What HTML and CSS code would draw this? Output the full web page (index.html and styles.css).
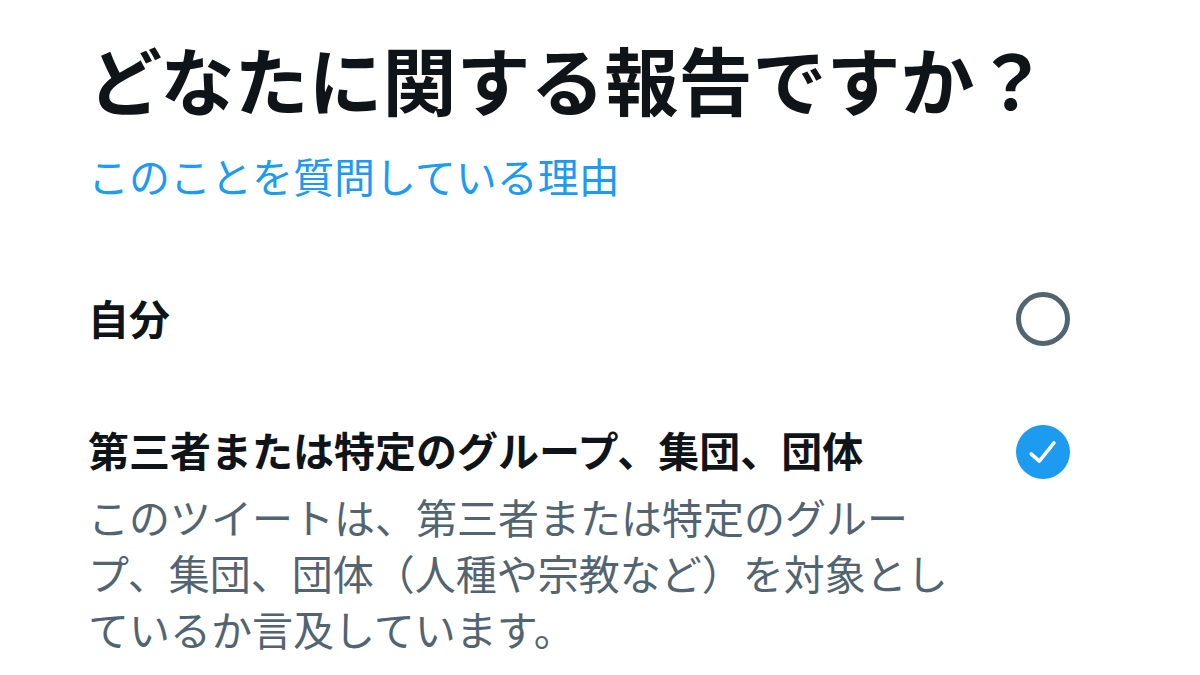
FILE: index.html
```html
<!DOCTYPE html>
<html lang="ja">
<head>
    <meta charset="UTF-8">
    <meta name="viewport" content="width=device-width, initial-scale=1.0">
    <title>報告</title>
    <link rel="stylesheet" href="styles.css">
</head>
<body>
    <div class="page">
        <!-- Header -->
        <h1 class="title">どなたに関する報告ですか？</h1>
        <a class="why-link" href="#">このことを質問している理由</a>

        <!-- Options -->
        <div class="options">
            <div class="option">
                <div class="option-text">
                    <div class="option-label">自分</div>
                </div>
                <span class="radio"></span>
            </div>

            <div class="option option-selected">
                <div class="option-text">
                    <div class="option-label">第三者または特定のグループ、集団、団体</div>
                    <p class="option-desc">このツイートは、第三者または特定のグルー<br>プ、集団、団体（人種や宗教など）を対象とし<br>ているか言及しています。</p>
                </div>
                <span class="radio radio-checked">
                    <svg viewBox="0 0 24 24" width="44" height="44">
                        <path d="M5.5 13 L10 17 L18 7" fill="none" stroke="#fff" stroke-width="1.9" stroke-linecap="round" stroke-linejoin="round"/>
                    </svg>
                </span>
            </div>
        </div>
    </div>
</body>
</html>
```

FILE: styles.css
```css
/* Reset */
* {
    margin: 0;
    padding: 0;
    box-sizing: border-box;
}

body {
    width: 1200px;
    height: 675px;
    overflow: hidden;
    background: #fff;
    font-family: "Noto Sans CJK JP", "Noto Sans", sans-serif;
    color: #0f1419;
}

.page {
    padding: 28px 130px 0 88px;
    display: flex;
    flex-direction: column;
}

/* Header */
.title {
    font-size: 74px;
    font-weight: 700;
    line-height: 100px;
    letter-spacing: 0;
}

.why-link {
    display: block;
    margin-top: 19px;
    font-size: 41px;
    line-height: 56px;
    color: #1d9bf0;
    text-decoration: none;
}

/* Options list */
.options {
    margin-top: 86px;
    display: flex;
    flex-direction: column;
    gap: 75px;
}

.option {
    display: flex;
    justify-content: space-between;
    align-items: flex-start;
}

.option-label {
    font-size: 41px;
    font-weight: 700;
    line-height: 56px;
}

.option-desc {
    margin-top: 11px;
    font-size: 41px;
    line-height: 56px;
    color: #536471;
}

/* Radio buttons */
.radio {
    width: 54px;
    height: 54px;
    margin-top: 3px;
    border: 5px solid #536471;
    border-radius: 50%;
    display: flex;
    justify-content: center;
    align-items: center;
    flex-shrink: 0;
}

.radio-checked {
    margin-top: 4px;
    border: none;
    background: #1d9bf0;
}
```
